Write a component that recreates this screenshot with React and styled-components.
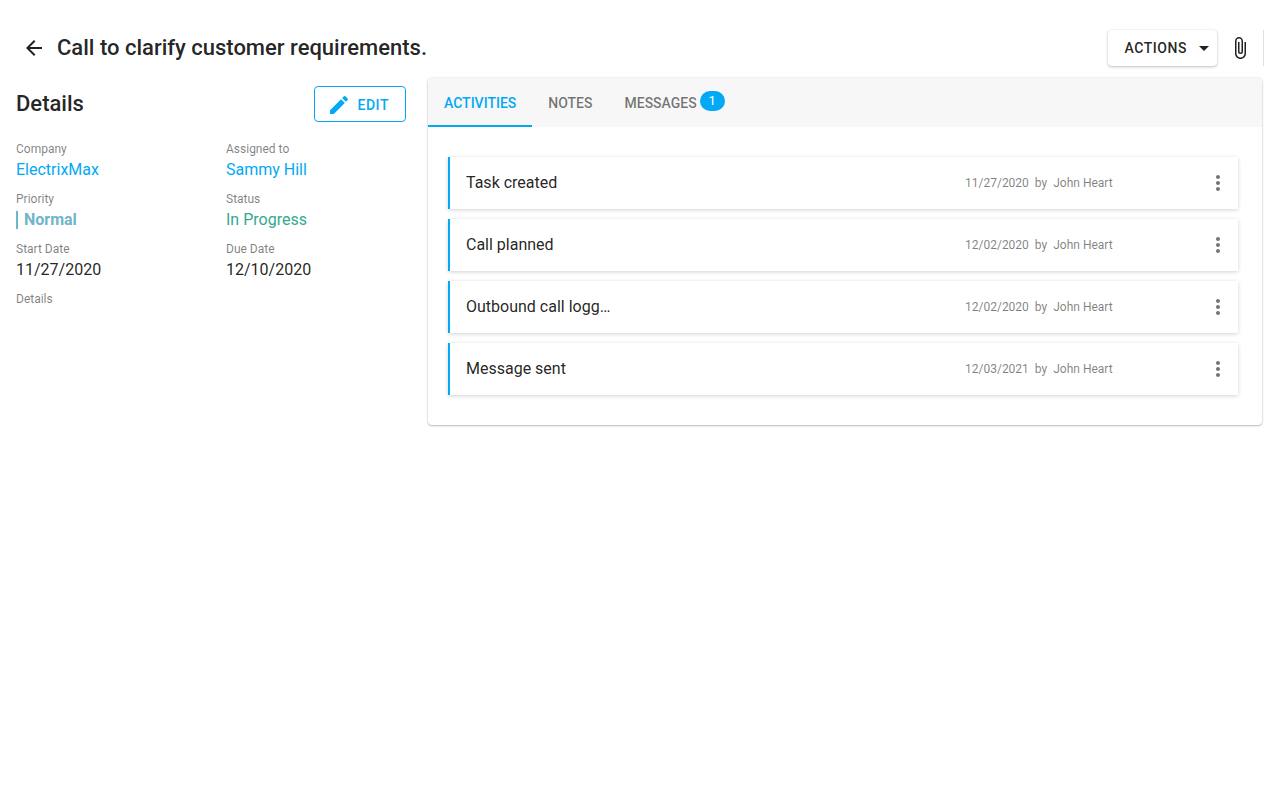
import React from "react";
import styled, { createGlobalStyle, css } from "styled-components";
import {
  MdArrowBack,
  MdArrowDropDown,
  MdAttachFile,
  MdEdit,
  MdMoreVert,
} from "react-icons/md";

const ACCENT = "#03a9f4";

const GlobalStyle = createGlobalStyle`
  *, *::before, *::after { box-sizing: border-box; }
  body {
    margin: 0;
    background: #fff;
    color: rgba(0, 0, 0, 0.87);
    font-family: Roboto, "Liberation Sans", sans-serif;
    font-size: 16px;
    line-height: 20px;
  }
  button { font-family: inherit; cursor: pointer; }
`;

const Page = styled.div`
  padding: 30px 16px;
`;

const Toolbar = styled.header`
  display: flex;
  align-items: center;
  height: 36px;
`;

const Heading = styled.h1`
  margin: 0 auto 0 5px;
  font-size: 22px;
  font-weight: 500;
  line-height: 28px;
`;

const IconButton = styled.button`
  display: flex;
  align-items: center;
  justify-content: center;
  flex: none;
  width: 36px;
  height: 36px;
  padding: 0;
  border: 0;
  background: transparent;
  color: ${(p) => (p.$muted ? "rgba(0, 0, 0, 0.54)" : "inherit")};
`;

const TextButton = styled.button`
  display: flex;
  align-items: center;
  height: 36px;
  border: 0;
  border-radius: 4px;
  background: #fff;
  color: inherit;
  font-size: 14px;
  font-weight: 500;
  letter-spacing: 0.04em;
  text-transform: uppercase;
`;

const ActionsButton = styled(TextButton)`
  gap: 5px;
  margin-right: 5px;
  padding: 0 1px 0 16px;
  box-shadow: 0 1px 3px rgba(0, 0, 0, 0.24), 0 0 1px rgba(0, 0, 0, 0.12);
`;

const EditButton = styled(TextButton)`
  gap: 6px;
  padding: 2px 16px 0 12px;
  border: 1px solid ${ACCENT};
  color: ${ACCENT};
`;

const ToolbarEnd = styled.div`
  height: 36px;
  margin-left: 5px;
  border-left: 1px solid #e0e0e0;
`;

const Content = styled.main`
  display: flex;
  align-items: flex-start;
  gap: 22px;
  padding: 12px 2px 0 0;
`;

const Details = styled.section`
  flex: 0 0 390px;
  padding-top: 8px;
`;

const DetailsHeader = styled.div`
  display: flex;
  align-items: center;
  justify-content: space-between;
  margin-bottom: 18px;
`;

const SectionTitle = styled.h2`
  margin: 0;
  font-size: 22px;
  font-weight: 500;
  line-height: 28px;
`;

const Fields = styled.dl`
  display: grid;
  grid-template-columns: 1fr 1fr;
  gap: 8px 30px;
  margin: 0;
`;

const Label = styled.dt`
  color: rgba(0, 0, 0, 0.5);
  font-size: 12px;
  line-height: 18px;
`;

const Value = styled.dd`
  margin: 0;
  line-height: 24px;
`;

const Link = styled.a`
  color: ${ACCENT};
  text-decoration: none;
`;

const Priority = styled.span`
  display: inline-block;
  padding-left: 6px;
  border-left: 2px solid #6fb6c8;
  color: #6fb6c8;
  font-weight: 700;
  line-height: 18px;
`;

const Status = styled.span`
  color: #34a98f;
`;

const Panel = styled.section`
  flex: 1;
  min-width: 0;
  overflow: hidden;
  border-radius: 4px;
  box-shadow: 0 1px 2px rgba(0, 0, 0, 0.24), 0 0 2px rgba(0, 0, 0, 0.16);
`;

const Tabs = styled.div`
  display: flex;
  height: 49px;
  background: #f7f7f7;
`;

const Tab = styled.button`
  display: flex;
  align-items: center;
  gap: 3px;
  padding: 2px 16px 0;
  border: 0;
  border-bottom: 2px solid transparent;
  background: transparent;
  color: rgba(0, 0, 0, 0.54);
  font-size: 14px;
  font-weight: 500;
  line-height: 20px;
  text-transform: uppercase;
  ${(p) =>
    p.$active &&
    css`
      border-bottom-color: ${ACCENT};
      color: ${ACCENT};
    `}
`;

const Badge = styled.span`
  min-width: 25px;
  height: 20px;
  margin-bottom: 4px;
  border-radius: 10px;
  background: ${ACCENT};
  color: #fff;
  font-size: 13px;
  font-weight: 400;
  line-height: 20px;
  text-align: center;
`;

const ActivityList = styled.ul`
  display: grid;
  gap: 10px;
  margin: 0;
  padding: 30px 24px 30px 20px;
  list-style: none;
`;

const Activity = styled.li`
  display: flex;
  align-items: center;
  height: 52px;
  padding: 0 2px 0 16px;
  border-left: 2px solid ${ACCENT};
  box-shadow: 0 1px 4px rgba(0, 0, 0, 0.18);
`;

const ActivityName = styled.span`
  flex: 0 0 150px;
  overflow: hidden;
  text-overflow: ellipsis;
  white-space: nowrap;
`;

const ActivityMeta = styled.span`
  display: flex;
  flex: 0 0 235px;
  gap: 6px;
  margin-left: auto;
  color: rgba(0, 0, 0, 0.5);
  font-size: 12px;
`;

const activities = [
  { name: "Task created", date: "11/27/2020", by: "John Heart" },
  { name: "Call planned", date: "12/02/2020", by: "John Heart" },
  { name: "Outbound call logged", date: "12/02/2020", by: "John Heart" },
  { name: "Message sent", date: "12/03/2021", by: "John Heart" },
];

function Field({ label, children }) {
  return (
    <div>
      <Label>{label}</Label>
      <Value>{children}</Value>
    </div>
  );
}

export default function App() {
  return (
    <>
      <GlobalStyle />
      <Page>
        <Toolbar>
          <IconButton type="button" aria-label="Back">
            <MdArrowBack size={24} />
          </IconButton>
          <Heading>Call to clarify customer requirements.</Heading>
          <ActionsButton type="button" aria-haspopup="menu">
            Actions
            <MdArrowDropDown size={24} />
          </ActionsButton>
          <IconButton type="button" aria-label="Attach file">
            <MdAttachFile size={24} />
          </IconButton>
          <ToolbarEnd />
        </Toolbar>
        <Content>
          <Details>
            <DetailsHeader>
              <SectionTitle>Details</SectionTitle>
              <EditButton type="button">
                <MdEdit size={24} />
                Edit
              </EditButton>
            </DetailsHeader>
            <Fields>
              <Field label="Company">
                <Link href="#company">ElectrixMax</Link>
              </Field>
              <Field label="Assigned to">
                <Link href="#assignee">Sammy Hill</Link>
              </Field>
              <Field label="Priority">
                <Priority>Normal</Priority>
              </Field>
              <Field label="Status">
                <Status>In Progress</Status>
              </Field>
              <Field label="Start Date">11/27/2020</Field>
              <Field label="Due Date">12/10/2020</Field>
              <Field label="Details" />
            </Fields>
          </Details>
          <Panel>
            <Tabs role="tablist">
              <Tab type="button" role="tab" aria-selected="true" $active>
                Activities
              </Tab>
              <Tab type="button" role="tab" aria-selected="false">
                Notes
              </Tab>
              <Tab type="button" role="tab" aria-selected="false">
                Messages
                <Badge>1</Badge>
              </Tab>
            </Tabs>
            <ActivityList>
              {activities.map((item) => (
                <Activity key={item.name}>
                  <ActivityName>{item.name}</ActivityName>
                  <ActivityMeta>
                    <span>{item.date}</span>
                    <span>by</span>
                    <span>{item.by}</span>
                  </ActivityMeta>
                  <IconButton type="button" aria-label="More" $muted>
                    <MdMoreVert size={24} />
                  </IconButton>
                </Activity>
              ))}
            </ActivityList>
          </Panel>
        </Content>
      </Page>
    </>
  );
}
